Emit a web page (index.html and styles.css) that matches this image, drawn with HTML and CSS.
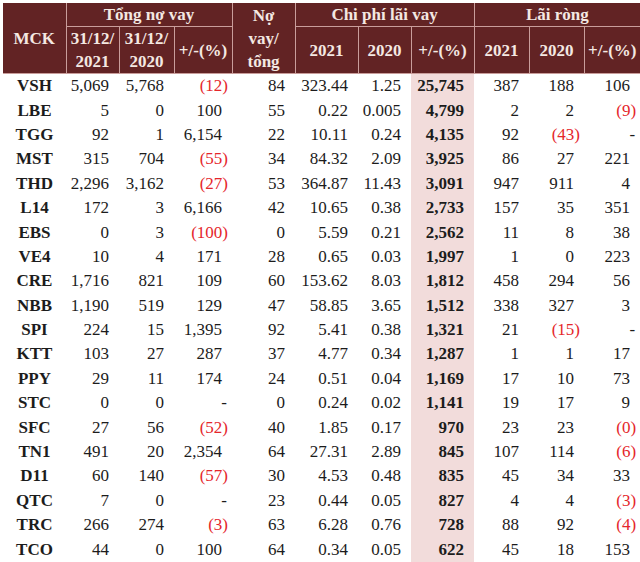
FILE: index.html
```html
<!DOCTYPE html>
<html lang="vi">
<head>
<meta charset="utf-8">
<link rel="stylesheet" href="styles.css">
</head>
<body>
<table class="tbl">
<colgroup>
<col class="c-mck"><col class="c-a"><col class="c-b"><col class="c-c"><col class="c-d"><col class="c-e"><col class="c-f"><col class="c-g"><col class="c-h"><col class="c-i"><col class="c-j">
</colgroup>
<thead>
<tr class="h1">
<th rowspan="2">MCK</th>
<th colspan="3">Tổng nợ vay</th>
<th rowspan="2" class="ml">Nợ<br>vay/<br>tổng</th>
<th colspan="3">Chi phí lãi vay</th>
<th colspan="3">Lãi ròng</th>
</tr>
<tr class="h2">
<th>31/12/<br>2021</th><th>31/12/<br>2020</th><th>+/-(%)</th>
<th>2021</th><th>2020</th><th>+/-(%)</th>
<th>2021</th><th>2020</th><th>+/-(%)</th>
</tr>
</thead>
<tbody>
<tr><td>VSH</td><td>5,069</td><td>5,768</td><td><span class="neg">(12)</span></td><td>84</td><td>323.44</td><td>1.25</td><td>25,745</td><td>387</td><td>188</td><td>106</td></tr>
<tr><td>LBE</td><td>5</td><td>0</td><td>100</td><td>55</td><td>0.22</td><td>0.005</td><td>4,799</td><td>2</td><td>2</td><td><span class="neg">(9)</span></td></tr>
<tr><td>TGG</td><td>92</td><td>1</td><td>6,154</td><td>22</td><td>10.11</td><td>0.24</td><td>4,135</td><td>92</td><td><span class="neg">(43)</span></td><td><span class="dash">-</span></td></tr>
<tr><td>MST</td><td>315</td><td>704</td><td><span class="neg">(55)</span></td><td>34</td><td>84.32</td><td>2.09</td><td>3,925</td><td>86</td><td>27</td><td>221</td></tr>
<tr><td>THD</td><td>2,296</td><td>3,162</td><td><span class="neg">(27)</span></td><td>53</td><td>364.87</td><td>11.43</td><td>3,091</td><td>947</td><td>911</td><td>4</td></tr>
<tr><td>L14</td><td>172</td><td>3</td><td>6,166</td><td>42</td><td>10.65</td><td>0.38</td><td>2,733</td><td>157</td><td>35</td><td>351</td></tr>
<tr><td>EBS</td><td>0</td><td>3</td><td><span class="neg">(100)</span></td><td>0</td><td>5.59</td><td>0.21</td><td>2,562</td><td>11</td><td>8</td><td>38</td></tr>
<tr><td>VE4</td><td>10</td><td>4</td><td>171</td><td>28</td><td>0.65</td><td>0.03</td><td>1,997</td><td>1</td><td>0</td><td>223</td></tr>
<tr><td>CRE</td><td>1,716</td><td>821</td><td>109</td><td>60</td><td>153.62</td><td>8.03</td><td>1,812</td><td>458</td><td>294</td><td>56</td></tr>
<tr><td>NBB</td><td>1,190</td><td>519</td><td>129</td><td>47</td><td>58.85</td><td>3.65</td><td>1,512</td><td>338</td><td>327</td><td>3</td></tr>
<tr><td>SPI</td><td>224</td><td>15</td><td>1,395</td><td>92</td><td>5.41</td><td>0.38</td><td>1,321</td><td>21</td><td><span class="neg">(15)</span></td><td><span class="dash">-</span></td></tr>
<tr><td>KTT</td><td>103</td><td>27</td><td>287</td><td>37</td><td>4.77</td><td>0.34</td><td>1,287</td><td>1</td><td>1</td><td>17</td></tr>
<tr><td>PPY</td><td>29</td><td>11</td><td>174</td><td>24</td><td>0.51</td><td>0.04</td><td>1,169</td><td>17</td><td>10</td><td>73</td></tr>
<tr><td>STC</td><td>0</td><td>0</td><td><span class="dash">-</span></td><td>0</td><td>0.24</td><td>0.02</td><td>1,141</td><td>19</td><td>17</td><td>9</td></tr>
<tr><td>SFC</td><td>27</td><td>56</td><td><span class="neg">(52)</span></td><td>40</td><td>1.85</td><td>0.17</td><td>970</td><td>23</td><td>23</td><td><span class="neg">(0)</span></td></tr>
<tr><td>TN1</td><td>491</td><td>20</td><td>2,354</td><td>64</td><td>27.31</td><td>2.89</td><td>845</td><td>107</td><td>114</td><td><span class="neg">(6)</span></td></tr>
<tr><td>D11</td><td>60</td><td>140</td><td><span class="neg">(57)</span></td><td>30</td><td>4.53</td><td>0.48</td><td>835</td><td>45</td><td>34</td><td>33</td></tr>
<tr><td>QTC</td><td>7</td><td>0</td><td><span class="dash">-</span></td><td>23</td><td>0.44</td><td>0.05</td><td>827</td><td>4</td><td>4</td><td><span class="neg">(3)</span></td></tr>
<tr><td>TRC</td><td>266</td><td>274</td><td><span class="neg">(3)</span></td><td>63</td><td>6.28</td><td>0.76</td><td>728</td><td>88</td><td>92</td><td><span class="neg">(4)</span></td></tr>
<tr><td>TCO</td><td>44</td><td>0</td><td>100</td><td>64</td><td>0.34</td><td>0.05</td><td>622</td><td>45</td><td>18</td><td>153</td></tr>
</tbody>
</table>
</body>
</html>
```
FILE: styles.css
```css
html, body {
  margin: 0;
  padding: 0;
  background: #ffffff;
}
body {
  padding: 3px 0 0 3px;
  font-family: "Liberation Serif", "DejaVu Serif", serif;
  font-size: 17px;
  color: #1c1c1c;
  overflow: hidden;
}
.tbl {
  border-collapse: collapse;
  border-style: hidden;
  table-layout: fixed;
  width: 637px;
}
.c-mck { width: 63px; }
.c-a { width: 53px; }
.c-b { width: 55px; }
.c-c { width: 58px; }
.c-d { width: 63px; }
.c-e { width: 63px; }
.c-f { width: 53px; }
.c-g { width: 63px; }
.c-h { width: 55px; }
.c-i { width: 55px; }
.c-j { width: 56px; }
.tbl th {
  background: #622324;
  color: #f4e8e2;
  font-weight: bold;
  text-align: center;
  vertical-align: middle;
  border: 1px solid #c99d9b;
  padding: 0;
  line-height: 23px;
}
.h1 th { height: 23px; }
.h2 th { height: 46px; }
.tbl td {
  padding: 0 10px 0 0;
  height: 24.4px;
  line-height: 24px;
  text-align: right;
  white-space: nowrap;
  vertical-align: middle;
}
.tbl td:first-child {
  text-align: center;
  font-weight: bold;
  padding: 0;
}
.tbl td:nth-child(8) {
  background: #f2dcdb;
  font-weight: bold;
}
.neg {
  color: #e5262b;
  margin-right: -6px;
}
.dash {
  margin-right: -5px;
}
```
